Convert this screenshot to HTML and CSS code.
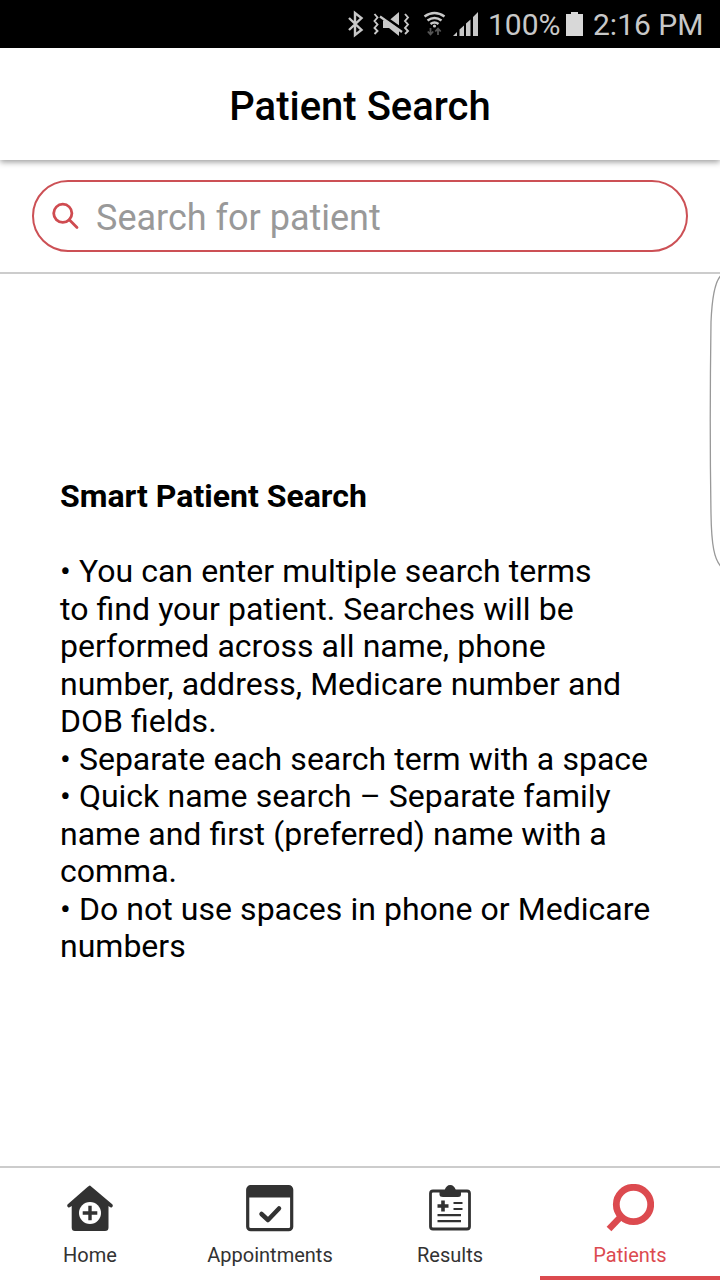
FILE: index.html
```html
<!DOCTYPE html>
<html lang="en">
<head>
    <meta charset="UTF-8">
    <meta name="viewport" content="width=device-width, initial-scale=1.0">
    <title>Patient Search</title>
    <link rel="stylesheet" href="styles.css">
</head>
<body>
    <div class="status-bar">
        <!-- Bluetooth, vibrate, wifi and signal -->
        <svg class="status-icons" width="136" height="48" viewBox="346 0 136 48">
            <path d="M349 18l12.500 12-6.500 5V13l6.500 5L349 30" fill="none" stroke="#c8c8c8" stroke-width="2.400"/>
            <path d="M374.500 14l3 3.500-3 3.500 3 3.500-3 3.500 3 3-3 3M405 14l3 3.500-3 3.500 3 3.500-3 3.500 3 3-3 3" fill="none" stroke="#c8c8c8" stroke-width="1.900"/>
            <path d="M383 20.500h6l10-8.500v24l-10-8h-6z" fill="#c8c8c8"/>
            <path d="M381 14.500l22 15.500" stroke="#000" stroke-width="3"/>
            <path d="M380 16.500l22 15.500" stroke="#c8c8c8" stroke-width="2.400"/>
            <path d="M424.500 16.500q10-7 20 0M427.500 20.500q7-5 14 0M430.500 24q4-3 8 0" fill="none" stroke="#c8c8c8" stroke-width="2.500"/>
            <circle cx="434.500" cy="26" r="1.600" fill="#c8c8c8"/>
            <path d="M430.500 28v6M427.800 31.500l2.700 3 2.700-3M438 35v-6M435.300 31.500l2.700-3 2.700 3" fill="none" stroke="#555" stroke-width="1.800"/>
            <path d="M453 36l4-4v4zM459.500 36v-6.500l4.500-4V36zM466 36V23.500l4.500-4V36zM473 36V17l5-5v24z" fill="#c8c8c8"/>
        </svg>
        <span class="battery-level">100%</span>
        <svg class="battery" width="17" height="24" viewBox="0 0 17 24">
            <path d="M5 0h7v2h5v22H0V2h5z" fill="#d8d8d8"/>
        </svg>
        <span class="clock">2:16 PM</span>
    </div>

    <header class="header">
        <h1>Patient Search</h1>
    </header>

    <div class="search">
        <div class="search-box">
            <svg width="28" height="28" viewBox="0 0 28 28" fill="none" stroke="#cf4b50" stroke-width="2.800">
                <circle cx="10.800" cy="11.300" r="9.100"/>
                <path d="M17.300 17.800l7.700 7.700" stroke-linecap="round"/>
            </svg>
            <input class="search-input" type="text" placeholder="Search for patient">
        </div>
    </div>

    <main class="content">
        <h2>Smart Patient Search</h2>
        <div class="tips">
            <p>• You can enter multiple search terms<br>to find your patient. Searches will be performed across all name, phone number, address, Medicare number and DOB fields.</p>
            <p>• Separate each search term with a space</p>
            <p>• Quick name search – Separate family name and first (preferred) name with a comma.</p>
            <p>• Do not use spaces in phone or Medicare numbers</p>
        </div>
        <!-- Edge panel handle -->
        <svg class="edge-handle" width="12" height="296" viewBox="0 0 12 296">
            <path d="M11.500 2C6 8 3 24 2 48C1.100 110 1.100 186 2 240C2.500 272 5.500 285 11.500 292" fill="none" stroke="#999" stroke-width="1.300"/>
        </svg>
    </main>

    <nav class="tabs">
        <a class="tab">
            <svg width="48" height="48" viewBox="0 0 48 48">
                <path d="M24 1.500L46.500 20.500Q47.500 22 46 23.200Q44.800 24 43.500 22.800L42.500 22V43.500Q42.500 47 39 47H9Q5.700 47 5.700 43.500V22L4.500 22.800Q3.200 24 2 23.200Q.500 22 1.500 20.500L21.500 3Q23.500 1.200 24 1.500z" fill="#323232"/>
                <circle cx="24" cy="29" r="11" fill="#fff"/>
                <path d="M24 21.700v14.600M16.700 29h14.600" stroke="#323232" stroke-width="3.400"/>
            </svg>
            <span>Home</span>
        </a>
        <a class="tab">
            <svg width="48" height="48" viewBox="0 0 48 48">
                <rect x="1.700" y="2.700" width="44" height="43" rx="3" fill="#fff" stroke="#323232" stroke-width="3.200"/>
                <path d="M2 13.500V4q0-2 2-2h40q2 0 2 2v9.500z" fill="#323232"/>
                <path d="M15.500 30l6.500 6 11-11.500" fill="none" stroke="#323232" stroke-width="4.500" stroke-linecap="round" stroke-linejoin="round"/>
            </svg>
            <span>Appointments</span>
        </a>
        <a class="tab">
            <svg width="48" height="48" viewBox="0 0 48 48">
                <rect x="4.500" y="7" width="39" height="38" rx="2.500" fill="none" stroke="#323232" stroke-width="2.800"/>
                <path d="M13.500 6h5.200C19.500 3 21.500 1 24.200 1S29 3 29.800 6H35v4.500q0 2.500-3 2.500H17q-3.500 0-3.500-2.500z" fill="#323232"/>
                <path d="M17 16.500v11M11.500 22h11" stroke="#323232" stroke-width="3.600"/>
                <path d="M27.500 19h9M27.500 25h9M11.500 31.200h23.500M11.500 37.200h23.500" stroke="#323232" stroke-width="2.200"/>
            </svg>
            <span>Results</span>
        </a>
        <a class="tab active">
            <svg width="48" height="48" viewBox="0 0 48 48">
                <circle cx="27.500" cy="20.500" r="17.200" fill="none" stroke="#dc4a4f" stroke-width="6.800"/>
                <path d="M15 32.500L3 45" stroke="#dc4a4f" stroke-width="6.500"/>
            </svg>
            <span>Patients</span>
        </a>
    </nav>
</body>
</html>
```
FILE: styles.css
```css
* {
    box-sizing: border-box;
}
body {
    display: flex;
    flex-direction: column;
    height: 1280px;
    margin: 0;
    font-family: Roboto, sans-serif;
    background-color: #fff;
    color: #000;
    overflow: hidden;
}

/* Status bar */
.status-bar {
    display: flex;
    align-items: center;
    justify-content: flex-end;
    height: 48px;
    padding-right: 16px;
    background-color: #000;
    color: #c8c8c8;
    font-size: 30px;
    line-height: 46px;
    white-space: nowrap;
}
.battery-level {
    width: 73px;
    margin-left: 6px;
    padding-top: 2px;
}
.battery {
    margin: 0 10px 0 5px;
}
.clock {
    width: 111px;
    padding-top: 2px;
}

/* Title */
.header {
    position: relative;
    display: flex;
    align-items: center;
    justify-content: center;
    height: 112px;
    padding-top: 4px;
    background-color: #fff;
    box-shadow: 0 2px 6px rgba(0, 0, 0, 0.4);
}
h1 {
    margin: 0;
    font-size: 40px;
    font-weight: 500;
}

/* Search field */
.search {
    height: 114px;
    padding: 20px 32px;
    border-bottom: 2px solid #ccc;
}
.search-box {
    display: flex;
    align-items: center;
    gap: 16px;
    height: 72px;
    padding: 0 18px;
    border: 2px solid #cc5055;
    border-radius: 36px;
}
.search-input {
    flex: 1;
    min-width: 0;
    height: 60px;
    padding: 4px 0 0;
    border: none;
    outline: none;
    background: none;
    font-family: inherit;
    font-size: 36px;
}
.search-input::placeholder {
    color: #999;
}

/* Search help */
.content {
    position: relative;
    display: flex;
    flex-direction: column;
    justify-content: center;
    flex: 1;
    padding: 4px 60px 0;
    font-size: 32px;
    line-height: 37.5px;
}
.content h2 {
    margin: 0 0 37.5px;
    font-size: 32px;
    font-weight: 700;
}
.content p {
    margin: 0;
    word-spacing: 0.2px;
}
.edge-handle {
    position: absolute;
    top: 0;
    right: -1px;
}

/* Bottom tabs */
.tabs {
    display: flex;
    height: 114px;
    border-top: 2px solid #ccc;
}
.tab {
    display: flex;
    flex: 1;
    flex-direction: column;
    align-items: center;
    gap: 11px;
    padding-top: 16px;
    border-bottom: 4px solid transparent;
    color: #323232;
    font-size: 20px;
    line-height: 24px;
}
.tab.active {
    border-bottom-color: #dc4a4f;
    color: #dc4a4f;
}
```
